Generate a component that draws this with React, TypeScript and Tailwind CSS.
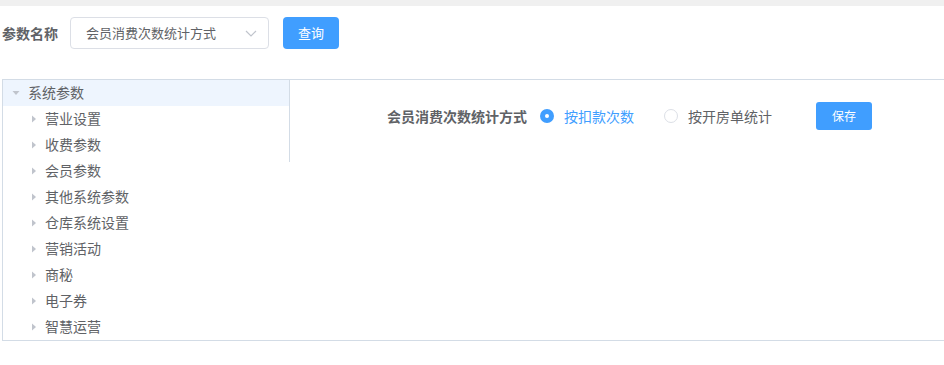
import React from "react";

const font = { fontFamily: '"Noto Sans CJK SC", "Noto Sans", sans-serif' };

const Caret = ({ down }: { down?: boolean }) =>
  down ? (
    <svg width="8" height="6" viewBox="0 0 8 6" className="shrink-0">
      <path d="M0.5 1 L7.5 1 L4 5 Z" fill="#c0c4cc" />
    </svg>
  ) : (
    <svg width="6" height="8" viewBox="0 0 6 8" className="shrink-0">
      <path d="M1 0.5 L1 7.5 L5 4 Z" fill="#c0c4cc" />
    </svg>
  );

const children = ["营业设置", "收费参数", "会员参数", "其他系统参数", "仓库系统设置", "营销活动", "商秘", "电子券", "智慧运营"];

export default function App() {
  return (
    <div className="w-[944px] h-[365px] bg-white text-[#606266]" style={font}>
      <div className="h-[6px] bg-[#f0f0f0]" />
      <div className="flex items-center mt-[11px] h-[32px]">
        <span className="ml-[2px] text-[14px] font-bold text-[#606266]">参数名称</span>
        <div className="ml-[12px] w-[199px] h-[32px] border border-[#dcdfe6] rounded-[4px] flex items-center justify-between pl-[15px] pr-[10px]">
          <span className="text-[13px] text-[#606266]">会员消费次数统计方式</span>
          <svg width="14" height="14" viewBox="0 0 14 14">
            <path d="M2 5 L7 10 L12 5" stroke="#c0c4cc" strokeWidth="1.2" fill="none" />
          </svg>
        </div>
        <button className="ml-[14px] w-[56px] h-[32px] bg-[#409eff] text-white text-[13px] rounded-[4px]">查询</button>
      </div>
      <div className="mt-[30px] ml-[2px] h-[262px] border-l border-t border-b border-[#d3dce6] flex">
        <div className="w-[286px]">
          <div className="h-[26px] bg-[#eef5fe] flex items-center pl-[9px]">
            <Caret down />
            <span className="ml-[8px] text-[14px] text-[#606266] -mt-[1px]">系统参数</span>
          </div>
          {children.map((c) => (
            <div key={c} className="h-[26px] flex items-center pl-[28px]">
              <Caret />
              <span className="ml-[8px] text-[14px] text-[#606266] -mt-[1px]">{c}</span>
            </div>
          ))}
        </div>
        <div className="flex-1 h-[82px] border-l border-[#d3dce6]">
          <div className="flex items-center mt-[22px] h-[28px] pl-[97px]">
            <span className="text-[14px] font-bold text-[#606266]">会员消费次数统计方式</span>
            <span className="ml-[13px] w-[14px] h-[14px] rounded-full bg-[#409eff] flex items-center justify-center">
              <span className="w-[4px] h-[4px] rounded-full bg-white" />
            </span>
            <span className="ml-[10px] text-[14px] text-[#409eff]">按扣款次数</span>
            <span className="ml-[30px] w-[14px] h-[14px] rounded-full border border-[#dcdfe6] bg-white" />
            <span className="ml-[10px] text-[14px] text-[#606266]">按开房单统计</span>
            <button className="ml-[44px] w-[56px] h-[28px] bg-[#409eff] text-white text-[12px] rounded-[3px]">保存</button>
          </div>
        </div>
      </div>
    </div>
  );
}
